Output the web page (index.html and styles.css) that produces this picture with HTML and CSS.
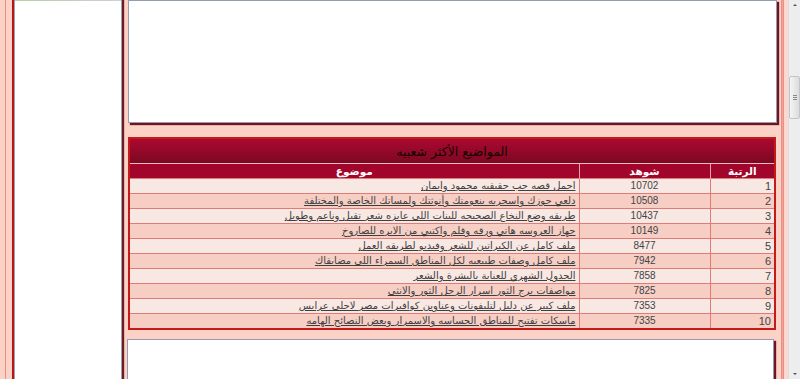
FILE: index.html
```html
<!DOCTYPE html>
<html lang="ar">
<head>
<meta charset="utf-8">
<title>المواضيع الأكثر شعبيه</title>
<link rel="stylesheet" href="styles.css">
</head>
<body>
<div class="rail"></div>
<div class="side-wrap"><div class="sidebar"><div class="side-top"></div></div></div>
<main class="main">
  <div class="box box-top"></div>
  <table class="popular" dir="rtl">
    <colgroup><col class="w-rank"><col class="w-views"><col class="w-topic"></colgroup>
    <thead>
      <tr><th colspan="3" class="title">المواضيع الأكثر شعبيه</th></tr>
      <tr class="heads"><th class="c-rank">الرتبة</th><th class="c-views">شوهد</th><th class="c-topic">موضوع</th></tr>
    </thead>
    <tbody>
      <tr class="odd"><td class="c-rank">1</td><td class="c-views">10702</td><td class="c-topic"><a href="#">احمل قصه حب حقيقيه محمود وايمان</a></td></tr>
      <tr class="even"><td class="c-rank">2</td><td class="c-views">10508</td><td class="c-topic"><a href="#">دلعي جوزك واسحريه بنعومتك وأنوثتك ولمساتك الخاصة والمختلفة</a></td></tr>
      <tr class="odd"><td class="c-rank">3</td><td class="c-views">10437</td><td class="c-topic"><a href="#">طريقه وضع النخاع الصحيحه للبنات اللى عايزه شعر تقيل وناعم وطويل</a></td></tr>
      <tr class="even"><td class="c-rank">4</td><td class="c-views">10149</td><td class="c-topic"><a href="#">جهاز العروسه هاتي ورقه وقلم واكتبي من الابره للصاروخ</a></td></tr>
      <tr class="odd"><td class="c-rank">5</td><td class="c-views">8477</td><td class="c-topic"><a href="#">ملف كامل عن الكيراتين للشعر وفيديو لطريقه العمل</a></td></tr>
      <tr class="even"><td class="c-rank">6</td><td class="c-views">7942</td><td class="c-topic"><a href="#">ملف كامل وصفات طبيعيه لكل المناطق السمراء اللى مضايقاك</a></td></tr>
      <tr class="odd"><td class="c-rank">7</td><td class="c-views">7858</td><td class="c-topic"><a href="#">الجدول الشهري للعناية بالبشرة والشعر</a></td></tr>
      <tr class="even"><td class="c-rank">8</td><td class="c-views">7825</td><td class="c-topic"><a href="#">مواصفات برج الثور اسرار الرجل الثور والانثى</a></td></tr>
      <tr class="odd"><td class="c-rank">9</td><td class="c-views">7353</td><td class="c-topic"><a href="#">ملف كبير عن دليل لتليفونات وعناوين كوافيرات مصر لاحلى عرايس</a></td></tr>
      <tr class="even"><td class="c-rank">10</td><td class="c-views">7335</td><td class="c-topic"><a href="#">ماسكات تفتيح للمناطق الحساسه والاسمرار وبعض النصائح الهامه</a></td></tr>
    </tbody>
  </table>
  <div class="box box-bottom"></div>
</main>
<div class="right-edge"><div class="edge-dark"></div><div class="edge-light"></div></div>
<div class="scrollbar">
  <div class="arrow up"></div>
  <div class="thumb"><span></span><span></span><span></span></div>
  <div class="track"></div>
  <div class="arrow down"></div>
</div>
</body>
</html>
```
FILE: styles.css
```css
html, body {
  margin: 0;
  padding: 0;
  height: 379px;
  overflow: hidden;
}
body {
  display: flex;
  background: #fcd2c6;
  font-family: "DejaVu Sans", "Noto Sans", sans-serif;
  font-size: 11px;
  color: #333;
}
.rail {
  width: 5px;
  flex: none;
  border-right: 1px solid #e58f86;
  margin-right: 6px;
}
.side-wrap {
  flex: none;
  border-left: 2px solid #b81616;
  margin-right: 6px;
}
.sidebar {
  width: 106px;
  height: 420px;
  background: #fff;
  border: 1px solid #9ca2b8;
  border-top: none;
  box-shadow: 2px 0 1px #6b1d22;
}
.side-top {
  height: 1px;
  background: linear-gradient(to right, #b9cf9f, #cbd0dc);
}
.main {
  flex: none;
  width: 649px;
  display: flex;
  flex-direction: column;
}
.main > * {
  flex-shrink: 0;
}
.box {
  background: #fff;
  border: 1px solid #939cb3;
  box-shadow: 2px 2px 1px #6f1420;
}
.box-top {
  height: 121px;
  margin-bottom: 14px;
}
.popular {
  width: 648px;
  border-collapse: collapse;
  border: 2px solid #c41a1a;
  table-layout: fixed;
}
.w-rank { width: 65px; }
.w-views { width: 131px; }
.popular th, .popular td {
  padding: 0 3px;
  height: 14px;
  line-height: 14px;
  white-space: nowrap;
  overflow: hidden;
}
.popular .title {
  height: 23px;
  background: linear-gradient(#ab0830, #7c0921);
  color: #140303;
  font-size: 12.5px;
  font-weight: normal;
  text-align: center;
  border-bottom: 1px solid #f2bcbc;
  padding-top: 1px;
}
.heads th {
  background: #a2052b;
  color: #fff;
  font-weight: bold;
  font-size: 10.5px;
  text-align: center;
  border-left: 1px solid #e9a6a6;
}
.c-rank { text-align: right; }
.c-views { text-align: center; }
.c-topic { text-align: right; }
.popular td {
  border: 1px solid #e27a76;
  font-family: "Liberation Sans", "DejaVu Sans", sans-serif;
  font-size: 11px;
  color: #444;
}
.popular td.c-views {
  font-size: 10px;
}
.popular td.c-topic {
  font-family: "DejaVu Sans", sans-serif;
  font-size: 10px;
}
.odd td { background: #f7e8e3; }
.even td { background: #f6cec4; }
.popular a {
  color: #3e3e3e;
  text-decoration: underline;
}
.box-bottom {
  margin-top: 9px;
  margin-left: -1px;
  margin-right: 3px;
  height: 60px;
}
.right-edge {
  flex: none;
  display: flex;
  margin-left: 4px;
}
.edge-dark {
  width: 1px;
  background: #f0a59c;
  border-left: 1px solid #e89086;
  border-right: 1px solid #e89086;
}
.edge-light {
  width: 4px;
  background: #fbd9d0;
}
.scrollbar {
  flex: 1;
  background: #ededed;
  border-left: 1px solid #dedede;
  display: flex;
  flex-direction: column;
  align-items: center;
}
.arrow {
  width: 0;
  height: 0;
  border-left: 2px solid transparent;
  border-right: 2px solid transparent;
}
.arrow.up {
  border-bottom: 2px solid #555;
  margin-top: 4px;
}
.arrow.down {
  border-top: 2px solid #555;
  margin-bottom: 4px;
}
.thumb {
  margin-top: 70px;
  width: 9px;
  height: 41px;
  flex-shrink: 0;
  background: linear-gradient(to right, #f4f4f4, #dcdcdc);
  border: 1px solid #c4c4c4;
  border-radius: 2px;
  display: flex;
  flex-direction: column;
  align-items: center;
  justify-content: center;
  gap: 1px;
}
.thumb span {
  display: block;
  width: 4px;
  height: 1px;
  background: #8a8a8a;
}
.track { flex: 1; }
```
